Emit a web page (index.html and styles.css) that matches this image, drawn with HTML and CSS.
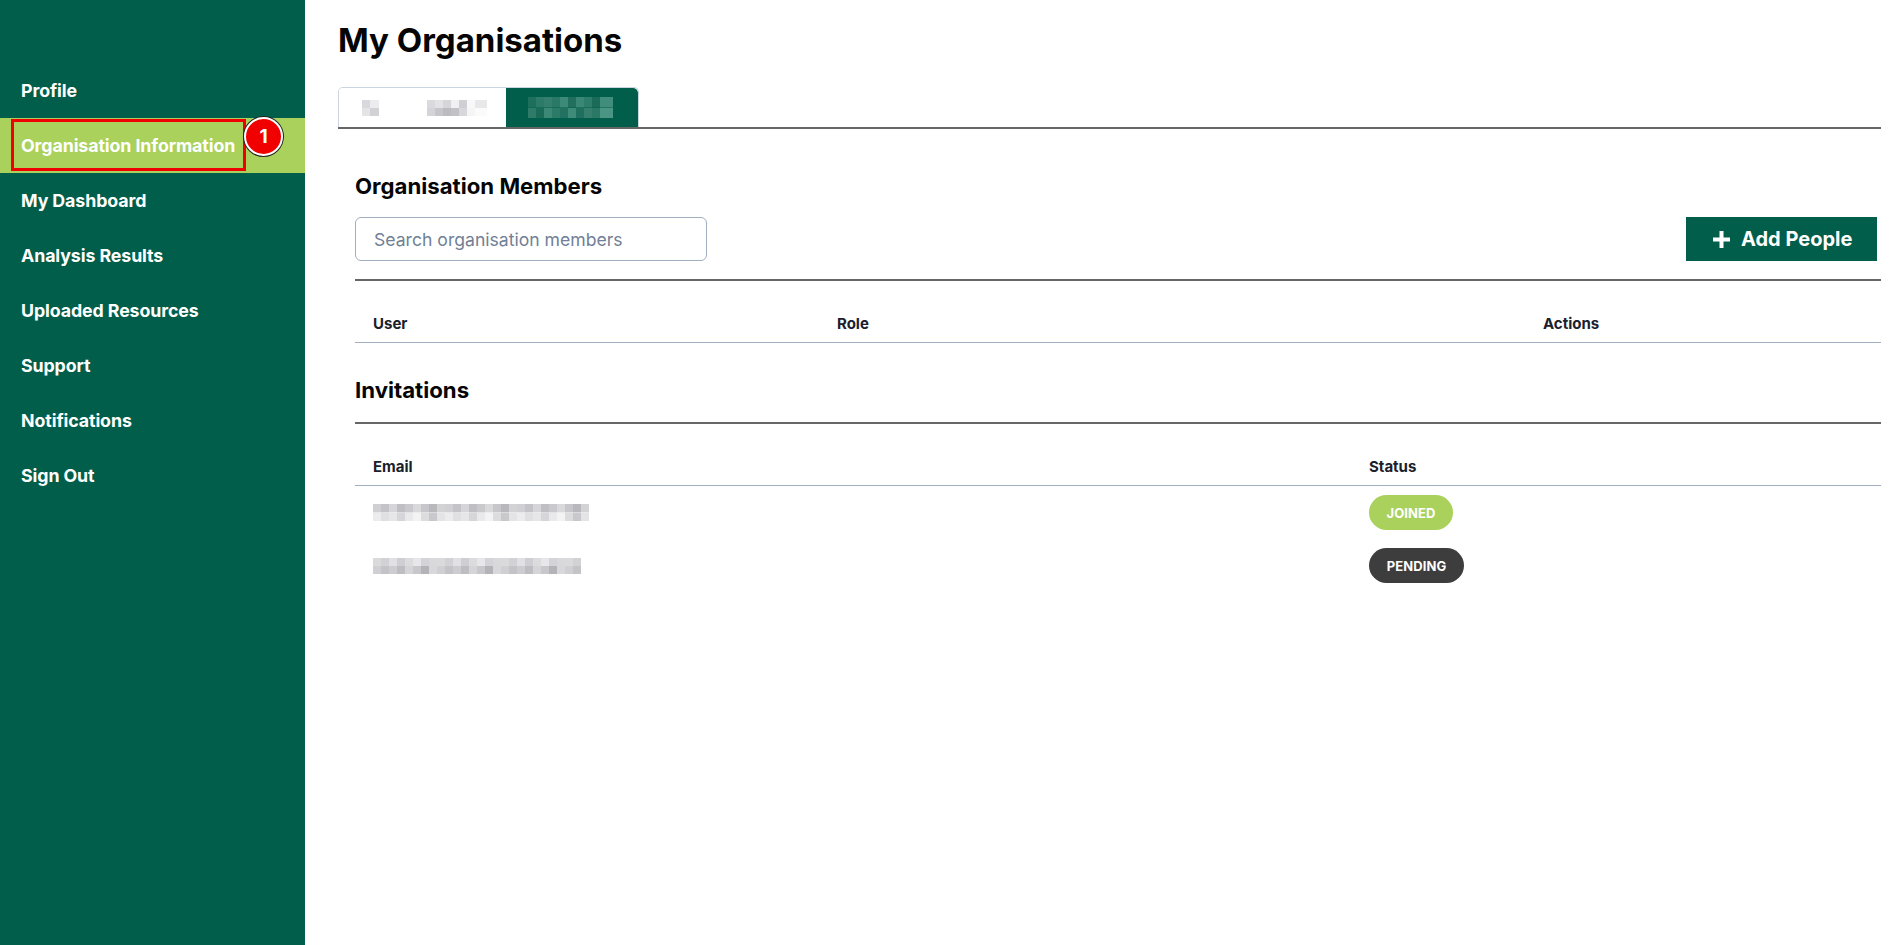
FILE: index.html
```html
<!DOCTYPE html>
<html lang="en">
<head>
<meta charset="utf-8">
<title>My Organisations</title>
<link rel="stylesheet" href="styles.css">
</head>
<body>
<div class="app">
  <aside class="sidebar">
    <nav class="nav">
      <a class="nav-item">Profile</a>
      <a class="nav-item active">
        <span class="annot-box"></span>
        Organisation Information
        <span class="annot-badge">1</span>
      </a>
      <a class="nav-item">My Dashboard</a>
      <a class="nav-item">Analysis Results</a>
      <a class="nav-item">Uploaded Resources</a>
      <a class="nav-item">Support</a>
      <a class="nav-item">Notifications</a>
      <a class="nav-item">Sign Out</a>
    </nav>
  </aside>

  <main class="main">
    <h1 class="title">My Organisations</h1>

    <div class="tabs-bar">
      <div class="tabs">
        <div class="tab">
          <span class="mosaic m-a"></span>
          <span class="mosaic m-b"></span>
        </div>
        <div class="tab tab-active">
          <span class="mosaic m-c"></span>
        </div>
      </div>
    </div>

    <section class="section">
      <h2 class="section-title">Organisation Members</h2>
      <div class="toolbar">
        <input class="search" type="text" placeholder="Search organisation members">
        <button class="btn-add" type="button">
          <svg class="plus" width="17" height="17" viewBox="0 0 17 17" aria-hidden="true">
            <rect x="6.5" y="0" width="4" height="17" fill="#fff"/>
            <rect x="0" y="6.5" width="17" height="4" fill="#fff"/>
          </svg>
          <span>Add People</span>
        </button>
      </div>

      <div class="table members">
        <div class="th">User</div>
        <div class="th">Role</div>
        <div class="th">Actions</div>
      </div>

      <h2 class="section-title invites-title">Invitations</h2>

      <div class="table invites">
        <div class="th">Email</div>
        <div class="th">Status</div>

        <div class="td"><span class="mosaic m-email1"></span></div>
        <div class="td"><span class="badge badge-joined">JOINED</span></div>

        <div class="td"><span class="mosaic m-email2"></span></div>
        <div class="td"><span class="badge badge-pending">PENDING</span></div>
      </div>
    </section>
  </main>
</div>
</body>
</html>
```

FILE: styles.css
```css
* { box-sizing: border-box; }

html, body {
  margin: 0;
  padding: 0;
  background: #ffffff;
  font-family: Inter, "Noto Sans", "Liberation Sans", sans-serif;
  color: #0a0a0a;
}

.app {
  display: flex;
  min-height: 945px;
}

/* ---------- Sidebar ---------- */
.sidebar {
  width: 305px;
  flex: 0 0 305px;
  background: #005e4a;
  padding-top: 63px;
}

.nav {
  display: flex;
  flex-direction: column;
}

.nav-item {
  position: relative;
  display: flex;
  align-items: center;
  height: 55px;
  padding-left: 21px;
  color: #ffffff;
  font-size: 17.8px;
  font-weight: 700;
  letter-spacing: -0.1px;
  text-decoration: none;
}

.nav-item.active {
  background: #a9d15b;
}

.annot-box {
  position: absolute;
  left: 11px;
  top: 1px;
  width: 235px;
  height: 52px;
  border: 3px solid #f00000;
}

.annot-badge {
  position: absolute;
  left: 244px;
  top: -1px;
  width: 39px;
  height: 39px;
  border-radius: 50%;
  background: #f00000;
  border: 2px solid #ffffff;
  box-shadow: 0 0 0 1px #222222;
  color: #ffffff;
  font-size: 19px;
  font-weight: 700;
  display: flex;
  align-items: center;
  justify-content: center;
}

/* ---------- Main ---------- */
.main {
  flex: 1;
  padding: 20px 14px 0 33px;
}

.title {
  margin: 0;
  font-size: 33px;
  line-height: 40px;
  font-weight: 700;
  color: #050505;
}

.tabs-bar {
  margin-top: 27px;
  border-bottom: 2px solid #666666;
}

.tabs {
  display: inline-flex;
  height: 40px;
  border: 1px solid #cbd5e1;
  border-bottom: none;
  border-radius: 5px 5px 0 0;
  overflow: hidden;
}

.tab {
  width: 167px;
  display: flex;
  align-items: center;
  padding-left: 23px;
  gap: 48px;
  background: #ffffff;
}

.tab-active {
  width: 132px;
  background: #005e4a;
  padding-left: 22px;
  border-radius: 0 5px 0 0;
}

/* pixelated redacted text */
.mosaic {
  display: inline-block;
  height: 16px;
  background-repeat: no-repeat;
  background-size: 100% 50%, 100% 50%;
  background-position: left top, left bottom;
}

.m-a {
  width: 17px;
  background-image:
    linear-gradient(90deg, #d9d9dd 0 8px, #ececee 8px 17px),
    linear-gradient(90deg, #e4e4e6 0 8px, #d2d2d6 8px 17px);
}

.m-b {
  width: 60px;
  background-image:
    repeating-linear-gradient(90deg, #dadade 0 8px, #e3e3e6 8px 16px, #d6d6da 16px 24px, #f0f0f2 24px 32px, #d0d0d4 32px 40px, #f8f8f9 40px 48px, #e8e8ea 48px 60px),
    repeating-linear-gradient(90deg, #d4d4d8 0 8px, #c6c6ca 8px 16px, #bcbcc0 16px 24px, #c2c2c6 24px 32px, #d8d8dc 32px 40px, #f5f5f6 40px 48px, #fbfbfb 48px 60px);
}

.m-c {
  width: 85px;
  height: 21px;
  background-image:
    repeating-linear-gradient(90deg, #1f6f5d 0 8px, #2c7b69 8px 16px, #347f6e 16px 24px, #2a7866 24px 32px, #3d8a79 32px 40px, #236f5e 40px 48px, #3a8776 48px 56px, #2e7c6a 56px 64px, #1c6b59 64px 72px, #418d7c 72px 85px),
    repeating-linear-gradient(90deg, #2e7b6a 0 8px, #1b6a58 8px 16px, #3b8877 16px 24px, #2c7a68 24px 32px, #237160 32px 40px, #3f8b7a 40px 48px, #206f5e 48px 56px, #367f6f 56px 64px, #2b7867 64px 72px, #4a9584 72px 85px);
}

.m-email1 {
  width: 216px;
  height: 17px;
  background-image:
    repeating-linear-gradient(90deg, #d0d0d4 0 8px, #c4c4c8 8px 16px, #d6d6da 16px 24px, #bfbfc4 24px 32px, #cacace 32px 40px, #d9d9dc 40px 48px, #c7c7cb 48px 56px, #b8b8bd 56px 64px, #d3d3d6 64px 72px),
    repeating-linear-gradient(90deg, #ececee 0 8px, #e0e0e3 8px 16px, #e6e6e8 16px 24px, #d6d6da 24px 32px, #e9e9eb 32px 40px, #f3f3f4 40px 48px, #dcdcdf 48px 56px, #c9c9cd 56px 64px, #e4e4e6 64px 72px);
}

.m-email2 {
  width: 208px;
  height: 16px;
  background-image:
    repeating-linear-gradient(90deg, #dadadd 0 8px, #d2d2d6 8px 16px, #e1e1e3 16px 24px, #cfcfd3 24px 32px, #dcdcdf 32px 40px, #e7e7e9 40px 48px, #d4d4d8 48px 56px, #d9d9dc 56px 64px),
    repeating-linear-gradient(90deg, #d0d0d4 0 8px, #c3c3c8 8px 16px, #cdcdd1 16px 24px, #bdbdc2 24px 32px, #d5d5d8 32px 40px, #c8c8cc 40px 48px, #b3b3b8 48px 56px, #d8d8db 56px 64px);
}

/* ---------- Section ---------- */
.section {
  padding-left: 17px;
  padding-top: 43px;
}

.section-title {
  margin: 0;
  font-size: 22.2px;
  line-height: 28px;
  font-weight: 700;
  color: #050505;
}

.toolbar {
  display: flex;
  align-items: center;
  justify-content: space-between;
  margin-top: 17px;
  padding-bottom: 18px;
  padding-right: 4px;
  border-bottom: 2px solid #666666;
}

.search {
  width: 352px;
  height: 44px;
  border: 1px solid #a0aec0;
  border-radius: 6px;
  padding: 0 18px;
  font-family: inherit;
  font-size: 17.6px;
  color: #2d3748;
  background: #ffffff;
  outline: none;
}

.search::placeholder {
  color: #718096;
}

.btn-add {
  display: flex;
  align-items: center;
  gap: 11px;
  width: 191px;
  height: 44px;
  padding: 0 0 0 27px;
  border: none;
  background: #005e4a;
  color: #ffffff;
  font-family: inherit;
  font-size: 20px;
  font-weight: 700;
  cursor: pointer;
}

.table {
  display: grid;
}

.members {
  grid-template-columns: 464px 706px 1fr;
  margin-top: 22px;
}

.invites {
  grid-template-columns: 996px 1fr;
  margin-top: 23px;
}

.th {
  height: 40px;
  display: flex;
  align-items: center;
  padding-left: 18px;
  padding-top: 1px;
  font-size: 15px;
  font-weight: 700;
  color: #1a202c;
  border-bottom: 1px solid #a0aec0;
}

.invites .th {
  height: 39px;
}

.td {
  height: 53px;
  display: flex;
  align-items: center;
  padding-left: 18px;
}

.invites-title {
  margin-top: 33px;
  padding-bottom: 18px;
  border-bottom: 2px solid #666666;
}

.badge {
  display: inline-flex;
  align-items: center;
  justify-content: center;
  height: 35px;
  border-radius: 18px;
  color: #ffffff;
  font-size: 13px;
  font-weight: 700;
  letter-spacing: 0.1px;
}

.badge-joined {
  width: 84px;
  background: #a9d15b;
}

.badge-pending {
  width: 95px;
  background: #3d3d3d;
}
```
